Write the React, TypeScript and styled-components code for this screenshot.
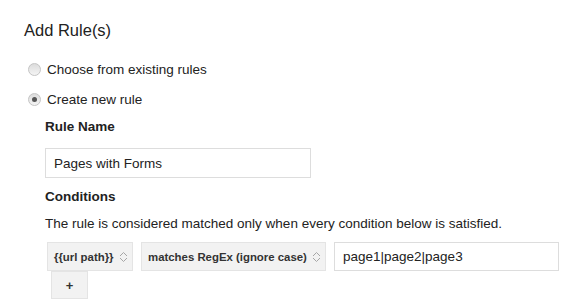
import React from 'react';
import styled, { createGlobalStyle } from 'styled-components';

const GlobalStyle = createGlobalStyle`
    body {
        margin: 0;
        background: #ffffff;
        color: #222222;
        font-family: "Liberation Sans", Arial, sans-serif;
    }
`;

const Page = styled.div`
    padding: 20px 0 0 24px;
`;

const Title = styled.h2`
    margin: 0;
    font-size: 16.5px;
    font-weight: normal;
    line-height: 20px;
`;

const RadioList = styled.div`
    display: flex;
    flex-direction: column;
    margin-top: 14px;
`;

const RadioRow = styled.label`
    display: flex;
    align-items: center;
    gap: 6px;
    height: 30px;
    padding-left: 4px;
    font-size: 13.5px;
    cursor: pointer;
`;

const RadioDot = styled.span<{ $checked?: boolean }>`
    position: relative;
    width: 13px;
    height: 13px;
    box-sizing: border-box;
    border-radius: 50%;
    border: 1px solid #c4c4c4;
    background: linear-gradient(180deg, #dcdcdc 0%, #f4f4f4 100%);
    &::after {
        content: "";
        display: ${(p) => (p.$checked ? 'block' : 'none')};
        position: absolute;
        left: 3px;
        top: 3px;
        width: 5px;
        height: 5px;
        border-radius: 50%;
        background: #555555;
    }
`;

const Section = styled.div`
    padding-left: 21px;
`;

const FieldLabel = styled.div<{ $gap: number }>`
    margin-top: ${(p) => p.$gap}px;
    font-size: 13.5px;
    font-weight: bold;
    line-height: 16px;
`;

const TextField = styled.input`
    display: block;
    box-sizing: border-box;
    width: 266px;
    height: 30px;
    margin-top: 13px;
    padding: 0 8px;
    border: 1px solid #dddddd;
    font-family: inherit;
    font-size: 13.5px;
    color: #222222;
    outline: none;
`;

const Description = styled.p`
    margin: 10.5px 0 0;
    font-size: 13.5px;
    line-height: 16px;
`;

const ConditionRow = styled.div`
    display: flex;
    gap: 8px;
    margin: 10.5px 0 0 2px;
`;

const SelectBox = styled.div<{ $width: number }>`
    display: flex;
    align-items: center;
    justify-content: space-between;
    box-sizing: border-box;
    width: ${(p) => p.$width}px;
    height: 29px;
    padding: 0 4px 0 6px;
    background: #f2f2f2;
    border: 1px solid #e4e4e4;
    font-size: 11.4px;
    font-weight: bold;
    color: #333333;
`;

const ValueInput = styled.input`
    box-sizing: border-box;
    width: 225px;
    height: 29px;
    padding: 0 8px;
    border: 1px solid #dddddd;
    font-family: inherit;
    font-size: 13.5px;
    color: #222222;
    outline: none;
`;

const AddButton = styled.button`
    display: block;
    box-sizing: border-box;
    width: 37px;
    height: 28px;
    margin-left: 6px;
    padding: 0;
    background: #f2f2f2;
    border: 1px solid #e4e4e4;
    font-family: inherit;
    font-size: 13px;
    font-weight: bold;
    color: #333333;
`;

const Chevrons = () => (
    <svg width="9" height="12" viewBox="0 0 9 12" fill="none" stroke="#a6a6a6" strokeWidth="1">
        <path d="M1 5 L4.5 1.5 L8 5" />
        <path d="M1 7 L4.5 10.5 L8 7" />
    </svg>
);

export default function App() {
    const [mode, setMode] = React.useState<'existing' | 'new'>('new');
    const [name, setName] = React.useState('Pages with Forms');
    const [value, setValue] = React.useState('page1|page2|page3');

    return (
        <Page>
            <GlobalStyle />
            <Title>Add Rule(s)</Title>
            <RadioList>
                <RadioRow onClick={() => setMode('existing')}>
                    <RadioDot $checked={mode === 'existing'} />
                    Choose from existing rules
                </RadioRow>
                <RadioRow onClick={() => setMode('new')}>
                    <RadioDot $checked={mode === 'new'} />
                    Create new rule
                </RadioRow>
            </RadioList>
            <Section>
                <FieldLabel $gap={5}>Rule Name</FieldLabel>
                <TextField value={name} onChange={(e) => setName(e.target.value)} />
                <FieldLabel $gap={11}>Conditions</FieldLabel>
                <Description>
                    The rule is considered matched only when every condition below is satisfied.
                </Description>
                <ConditionRow>
                    <SelectBox $width={86}>
                        {'{{url path}}'}
                        <Chevrons />
                    </SelectBox>
                    <SelectBox $width={185}>
                        matches RegEx (ignore case)
                        <Chevrons />
                    </SelectBox>
                    <ValueInput value={value} onChange={(e) => setValue(e.target.value)} />
                </ConditionRow>
                <AddButton>+</AddButton>
            </Section>
        </Page>
    );
}
